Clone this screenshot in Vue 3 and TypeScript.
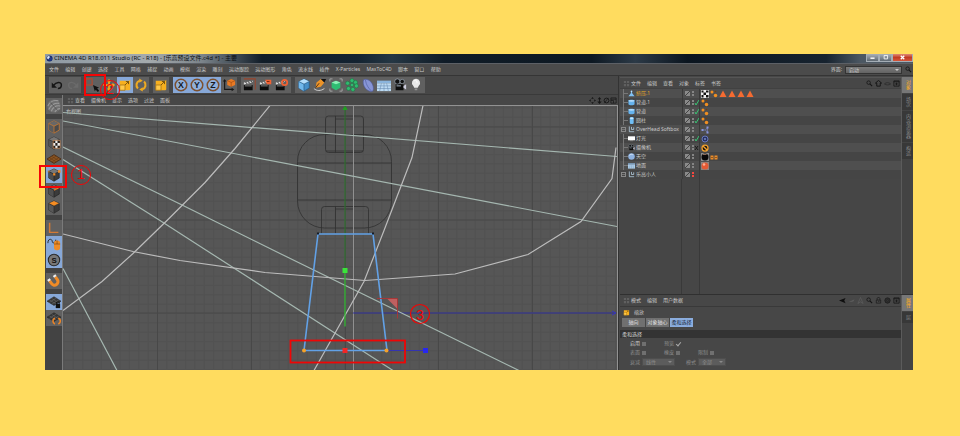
<script setup lang="ts">
import { ref } from 'vue'

interface SceneObject {
  name: string
  icon: string
  child: boolean
  state: 'check' | 'off' | 'red' | 'none'
  tags: string[]
  selected?: boolean
}
interface Tool {
  icon: string
  label: string
  on?: boolean
}

const menus = ['文件', '编辑', '创建', '选择', '工具', '网格', '捕捉', '动画', '模拟', '渲染', '雕刻', '运动跟踪', '运动图形', '角色', '流水线', '插件', 'X-Particles', 'MaxToC4D', '脚本', '窗口', '帮助']
const viewMenus = ['查看', '摄像机', '显示', '选项', '过滤', '面板']
const objectMenus = ['文件', '编辑', '查看', '对象', '标签', '书签']
const attrMenus = ['模式', '编辑', '用户数据']

const cube = (top: string, side: string, front: string, edge: string) =>
  `<path d="M8 1l6 3v7.500l-6 3.500-6-3.500V4z" fill="${side}" stroke="${edge}" stroke-width=".8"/><path d="M2 4l6 3 6-3-6-3z" fill="${top}"/><path d="M2 4l6 3v8l-6-3.500z" fill="${front}"/><path d="M2 4l6 3 6-3M8 7v8" fill="none" stroke="${edge}" stroke-width=".8"/>`
const clapper = '<path d="M1 8h10v6H1z" fill="#0c0c0c"/><path d="M1 5l10-2v2L1 7.500z" fill="#ddd"/><path d="M3 4.600l1.500 2M6 4l1.500 2M9 3.400l1.500 2M3 8l-1 1.500M6 8L5 9.500M9 8L8 9.500" stroke="#111"/><path d="M2 9h8" stroke="#ccc" stroke-width=".7"/>'
const axisLetter = (c: string) =>
  `<circle cx="8" cy="8" r="6.600" fill="#8fb0dc" stroke="#7d512f" stroke-width="1.700"/><text x="8" y="11.600" text-anchor="middle" font-size="10" font-weight="700" font-family="Liberation Sans, sans-serif" fill="#16181c">${c}</text>`
const plane = '<path d="M0 7l8-5 8 5-8 5z" fill="#363636" stroke="#222" stroke-width=".6"/><path d="M2.700 5.500l8 5M5.500 4l8 5M2.700 8.500l8-5M5.500 10.500l8-5" stroke="#777" stroke-width=".5"/>'

const art: Record<string, string> = {
  undo: '<path d="M4 8.500C7 4 13 4 13 8c0 2.500-2 4-4 4" fill="none" stroke="#161616" stroke-width="1.700"/><path d="M2 5v6h6z" fill="#161616"/>',
  redo: '<path d="M12 8.500C9 4 3 4 3 8c0 2.500 2 4 4 4" fill="none" stroke="#6b6b6b" stroke-width="1.500"/><path d="M14 5v6H8z" fill="#6b6b6b"/>',
  select: '<path d="M0 1h7v7H0z" fill="none" stroke="#b5482c" stroke-width="1.300"/><path d="M8 8l7 3-2.300.8L15 14.500l-1.500 1.500-2.300-2.500L10 15z" fill="#111"/>',
  move: '<path d="M8 1l2.500 3H9v3h3V5.500L15 8l-3 2.500V9H9v3h1.500L8 15l-2.500-3H7V9H4v1.500L1 8l3-2.500V7h3V4H5.500z" fill="#f3a71c"/>',
  scale: '<path d="M2 3h11l1-1v11l-1 1H2z" fill="#f7b01f"/><path d="M2 8h6v6H2z" fill="#ffc94a" stroke="#9a6a12" stroke-width=".8"/><path d="M8 8l4-4M9 4h3v3" fill="none" stroke="#6d4a0d"/>',
  rotate: '<path d="M6.500 3a5.400 5.400 0 00-2 9M9.500 13a5.400 5.400 0 002-9" fill="none" stroke="#efaa20" stroke-width="2.400"/><path d="M6 .5l4 2.500-4 2.500zM10 10.500v5L6 13z" fill="#efaa20"/>',
  x: axisLetter('X'), y: axisLetter('Y'), z: axisLetter('Z'),
  world: '<path d="M3 3v10h9" fill="none" stroke="#181818" stroke-width="1.300"/><path d="M3 1L1 4h4zM14 13l-3-2v4z" fill="#181818"/><path d="M10.500 1L15 3v5l-4.500 2L6 8V3z" fill="#ea7a24"/><path d="M6 3l4.500 2L15 3M10.500 5v5" stroke="#8c420c" stroke-width=".6" fill="none"/>',
  clap1: '<path d="M1 1h13v12" fill="none" stroke="#99452c" stroke-width="1.200"/>' + clapper,
  clap2: clapper + '<path d="M7 2h7v5H9z" fill="#ef6234"/><path d="M9 4h3" stroke="#71220d"/>',
  clap3: clapper + '<circle cx="11" cy="5" r="3" fill="none" stroke="#ef6234" stroke-width="2"/>',
  cube: cube('#b4defb', '#4790c9', '#70b8ec', '#265a85'),
  pen: '<path d="M1 12c3 3 8 3 12 0" stroke="#ddd" fill="none"/><path d="M3 11l1-6 5-4 4 4-4 5z" fill="#ec9328"/><path d="M9 1l4 4 2-4z" fill="#111"/><path d="M3 11l4-5" stroke="#45270a"/>',
  sub: '<path d="M1 4V1h3M12 1h3v3M15 12v3h-3M4 15H1v-3" fill="none" stroke="#bbb" stroke-width=".8"/><path d="M8 3l5 2v6l-5 3-5-3V5z" fill="#2ebd72"/><path d="M3 5l5 2 5-2-5-2z" fill="#8bf0b6"/>',
  array: '<g fill="#30b96f" stroke="#126b3a" stroke-width=".5"><circle cx="8" cy="3" r="2.300"/><circle cx="12" cy="5" r="2.300"/><circle cx="13" cy="9" r="2.300"/><circle cx="9" cy="13" r="2.300"/><circle cx="4" cy="12" r="2.300"/><circle cx="3" cy="6" r="2.300"/><circle cx="8" cy="8" r="2"/></g>',
  bend: '<path d="M3 2c4-2 10 2 11 8s-2 6-4 5C5 14 1 7 3 2z" fill="#8795d6" stroke="#4b5797" stroke-width=".7"/><path d="M5 2c1 6 3 9 7 13" fill="none" stroke="#5e6bb0"/>',
  floor: '<path d="M0 3h16v3H0z" fill="#8ab4dc"/><path d="M0 6h16v9H0z" fill="#bcdaf2"/><path d="M0 9h16M0 12h16M5 6l-2 9M11 6l2 9M8 6v9" stroke="#6187ac" stroke-width=".6"/>',
  camera: '<path d="M3 7h9v7H3z" fill="#0d0d0d"/><circle cx="5" cy="4" r="3" fill="#111" stroke="#bcd" stroke-width=".6"/><circle cx="10.500" cy="4" r="2.500" fill="#111" stroke="#bcd" stroke-width=".6"/><path d="M12 9l3-2v6l-3-2z" fill="#ccd"/><path d="M4 9h5" stroke="#bcd"/>',
  bulb: '<path d="M8 1a4.500 4.500 0 013 8l-1 2H6L5 9a4.500 4.500 0 013-8z" fill="#e8e8e8"/><path d="M6 3c2-1 4 1 3 3" stroke="#fff" fill="none"/><path d="M6.500 12h3v2h-3z" fill="#929292"/>',
  texture: '<circle cx="8" cy="8" r="7.500" fill="#707070"/><path d="M1 8C3 3 8 1 13 2M2 12C4 7 9 4 14 5M5 14c1-4 5-7 10-6M9 15c1-2 3-4 6-4" stroke="#9a9a9a" fill="none" stroke-width="1.200"/><path d="M4 4l8 9" stroke="#555"/>',
  model: cube('#676767', '#4b4b4b', '#5b5b5b', '#d77c2c'),
  check: cube('#777', '#444', '#555', '#333') + '<path d="M7 5h8v9H7z" fill="#eee"/><path d="M7 5h2.500v3H7zM12 5h3v3h-3zM9.500 8H12v3H9.500zM7 11h2.500v3H7zM12 11h3v3h-3z" fill="#26201c"/><path d="M7 5h8v9H7z" fill="none" stroke="#d57d3a" stroke-width=".6"/>',
  work: '<path d="M0 8l8-5 8 5-8 5z" fill="#8b5522" stroke="#4b2c12"/><path d="M2.700 6.500l8 5M5.500 5l8 5M2.700 9.500l8-5M5.500 11.500l8-5" stroke="#5c3413" stroke-width=".6"/>',
  points: cube('#777', '#3b3b3b', '#4d4d4d', '#222') + '<path d="M7 6h2.500v2.500H7zM12.500 2.500h3v3h-3z" fill="#f28a22"/><path d="M1 3h2v2H1z" fill="#a66a30"/>',
  edges: cube('#777', '#3b3b3b', '#505050', '#222') + '<path d="M8 7l6-3" stroke="#e57e25" stroke-width="1.500"/>',
  polys: cube('#f58d23', '#3b3b3b', '#585858', '#292929'),
  axis: '<path d="M3 2v11h10" fill="none" stroke="#d47a35" stroke-width="1.700"/>',
  mouse: '<path d="M1 7c0-6 5-5 5-2s4 2 4-2" fill="none" stroke="#222"/><rect x="8" y="4" width="7" height="11" rx="3" fill="#ef8c27"/><path d="M8 8h7M11.500 4v4" stroke="#74400d" stroke-width=".7"/>',
  solo: '<circle cx="8" cy="8" r="6.500" fill="#777" stroke="#292929" stroke-width="1.200"/><text x="8" y="11.300" text-anchor="middle" font-size="9" font-weight="700" font-family="Liberation Sans, sans-serif" fill="#111">S</text>',
  magnet: '<g transform="rotate(-35 8 8)"><path d="M4 5v4a4 4 0 008 0V5" fill="none" stroke="#f08b26" stroke-width="3.500"/><path d="M2.300 2.500h3.500V5H2.300zM10.200 2.500h3.500V5h-3.500z" fill="#eee"/></g>',
  lock: plane + '<path d="M10 10h5v5h-5z" fill="#111"/><path d="M11 10V8h3v2" fill="none" stroke="#111"/>',
  snap: plane + '<path d="M9 8c-3 2-3 5 0 7M13 8c3 2 3 5 0 7" fill="none" stroke="#ea8427" stroke-width="1.800"/>',
  cone: '<path d="M8 2l2 6 5 6H1l5-6z" fill="#7fc1f3"/><circle cx="8" cy="3" r="2" fill="#b7e0ff"/>',
  tube: '<path d="M1 3c2-2 12-2 14 0v9c-2 3-12 3-14 0z" fill="#65b3ee"/><ellipse cx="8" cy="4" rx="7" ry="2" fill="#b4dcfb"/>',
  cyl: '<rect x="4" y="0" width="9" height="16" rx="3" fill="#6fbdf4"/><ellipse cx="8.500" cy="3" rx="4" ry="2" fill="#c2e5ff"/>',
  nil: '<path d="M3 1v12h11M8 2v6h5V3" fill="none" stroke="#bcd7ea" stroke-width="1.700"/>',
  light: '<path d="M0 3h16v9H0z" fill="#fff"/><path d="M4 12h8v2H4z" fill="#999"/>',
  sky: '<circle cx="8" cy="8" r="7.500" fill="#8fb2df"/><path d="M3 6c2-3 5-4 8-2" fill="none" stroke="#d4e5f8" stroke-width="2"/>',
  tCheck: '<path d="M0 0h16v16H0z" fill="#eee"/><path d="M1 1h4v4H1zM10 1h5v4h-5zM5 5h5v5H5zM1 10h4v5H1zM10 10h5v5h-5z" fill="#111"/>',
  tDots: '<circle cx="4" cy="4" r="3" fill="#ef8f22"/><circle cx="11" cy="11" r="3.500" fill="#ef8f22"/><circle cx="11" cy="3" r="1.500" fill="#713d0e"/>',
  tTri: '<path d="M8 1l7 13H1z" fill="#f56b31"/>',
  tNet: '<path d="M3 8h6l4-5M9 8l4 5M13 3v10" fill="none" stroke="#8794df"/><path d="M1 6h4v4H1zM11 1h4v4h-4zM11 11h4v4h-4z" fill="#8794df"/>',
  tTarget: '<circle cx="8" cy="8" r="6" fill="#273260" stroke="#6878bd" stroke-width="2"/><circle cx="8" cy="8" r="2" fill="#7787c9"/>',
  tBan: '<circle cx="8" cy="8" r="6" fill="#111" stroke="#f2a02c" stroke-width="2.500"/><path d="M4 4l8 8" stroke="#f2a02c" stroke-width="3"/>',
  tBlack: '<path d="M0 0h16v16H0z" fill="#8c8c8c"/><circle cx="8" cy="8" r="7" fill="#080808"/><path d="M4 3h7" stroke="#8a6a5a" stroke-width="2"/>',
  tComp: '<path d="M1 5h6v8H1zM9 5h6v8H9z" fill="#e98c2a"/><path d="M3 9h2M11 9h2" stroke="#482509" stroke-width="2"/>',
  tRed: '<path d="M0 0h16v16H0z" fill="#8c8480"/><circle cx="8" cy="8" r="7" fill="#e45a35"/><circle cx="6" cy="5" r="2.500" fill="#ffac8f"/>',
  search: '<circle cx="6" cy="6" r="4" fill="none" stroke="#151515" stroke-width="1.800"/><path d="M9 9l5 5" stroke="#151515" stroke-width="2.500"/>',
  home: '<path d="M8 1l7 6h-3v7H4V7H1z" fill="none" stroke="#111" stroke-width="2"/>',
  eye: '<path d="M1 9c4-4 10-4 14 0-4 3-10 3-14 0z" fill="none" stroke="#242424" stroke-width="1.500"/>',
  plus: '<path d="M2 2h12v12H2zM2 4h12M8 6v6M5 9h6" fill="none" stroke="#161616" stroke-width="1.800"/>',
  pan: '<path d="M8 0l3 4H5zM8 16l3-4H5zM0 8l4-3v6zM16 8l-4-3v6z" fill="#161616"/>',
  dolly: '<path d="M8 0l4 5H9v5h4l-5 6-5-6h4V5H4z" fill="#161616"/>',
  orbit: '<circle cx="8" cy="8" r="5.500" fill="none" stroke="#161616" stroke-width="2"/><path d="M3 14L12 2" stroke="#161616" stroke-width="1.500"/>',
  maxi: '<path d="M2 2h12v12H2zM2 5h12M2 8h6v6" fill="none" stroke="#161616" stroke-width="1.500"/>',
  back: '<path d="M0 8l15-6-3 6 3 6z" fill="#0f0f0f"/>',
  fwd: '<path d="M1 12l14-7-3 5z" fill="#5e5e5e"/>',
  up: '<path d="M8 1l6 14-6-4-6 4z" fill="none" stroke="#606060" stroke-width="1.500"/>',
  pad: '<path d="M3 7h10v7H3zM5 7V3c1-3 5-3 6 0v4M7 10h3" fill="none" stroke="#1c1c1c" stroke-width="1.700"/>',
  aim: '<circle cx="8" cy="8" r="6" fill="#333" stroke="#1c1c1c" stroke-width="2"/><circle cx="8" cy="8" r="2.500" fill="none" stroke="#1c1c1c"/>',
  grip: '<path d="M2 2h5v5H2zM9 2h5v5H9zM2 9h5v5H2zM9 9h5v5H9z" fill="#606060"/>',
  logo: '<circle cx="8" cy="8" r="7" fill="#182c6b"/><circle cx="6" cy="6" r="3.500" fill="#dce6f7"/><circle cx="10" cy="9" r="4" fill="#203c8a"/>',
}

const toolGroups: Tool[][] = [
  [{ icon: 'undo', label: '撤销' }, { icon: 'redo', label: '重做' }],
  [{ icon: 'select', label: '选择' }, { icon: 'move', label: '移动' }, { icon: 'scale', label: '缩放', on: true }, { icon: 'rotate', label: '旋转' }],
  [{ icon: 'scale', label: '最近工具' }],
  [{ icon: 'x', label: 'X 轴', on: true }, { icon: 'y', label: 'Y 轴', on: true }, { icon: 'z', label: 'Z 轴', on: true }, { icon: 'world', label: '坐标系统' }],
  [{ icon: 'clap1', label: '渲染视图' }, { icon: 'clap2', label: '渲染到图片' }, { icon: 'clap3', label: '渲染设置' }],
  [{ icon: 'cube', label: '立方体' }, { icon: 'pen', label: '画笔' }, { icon: 'sub', label: '细分' }, { icon: 'array', label: '阵列' }, { icon: 'bend', label: '扭曲' }, { icon: 'floor', label: '地面' }, { icon: 'camera', label: '摄像机' }, { icon: 'bulb', label: '灯光' }],
]
const sideGroups: Tool[][] = [
  [{ icon: 'texture', label: '可编辑' }],
  [{ icon: 'model', label: '模型' }, { icon: 'check', label: '纹理' }, { icon: 'work', label: '工作平面' }, { icon: 'points', label: '点', on: true }, { icon: 'edges', label: '边' }, { icon: 'polys', label: '多边形' }],
  [{ icon: 'axis', label: '轴心' }, { icon: 'mouse', label: '微调', on: true }, { icon: 'solo', label: '独显', on: true }],
  [{ icon: 'magnet', label: '捕捉' }],
  [{ icon: 'lock', label: '锁定平面', on: true }, { icon: 'snap', label: '平面捕捉' }],
]

const objects = ref<SceneObject[]>([
  { name: '挤压.1', icon: 'cone', child: true, state: 'none', tags: ['tCheck', 'tDots', 'tTri', 'tTri', 'tTri', 'tTri'], selected: true },
  { name: '管道.1', icon: 'tube', child: true, state: 'check', tags: ['tDots'] },
  { name: '管道', icon: 'tube', child: true, state: 'check', tags: ['tDots'] },
  { name: '圆柱', icon: 'cyl', child: true, state: 'check', tags: ['tDots'] },
  { name: 'OverHead Softbox', icon: 'nil', child: false, state: 'none', tags: ['tNet'] },
  { name: '灯光', icon: 'light', child: true, state: 'check', tags: ['tTarget'] },
  { name: '摄像机', icon: 'camera', child: true, state: 'off', tags: ['tBan'] },
  { name: '天空', icon: 'sky', child: true, state: 'none', tags: ['tBlack', 'tComp'] },
  { name: '地面', icon: 'floor', child: true, state: 'none', tags: ['tRed'] },
  { name: '乐高小人', icon: 'nil', child: false, state: 'red', tags: [] },
])

const attrTabs = ['轴向', '对象轴心', '柔和选择']
const activeTab = ref('柔和选择')

// World grid: one major line every ten minor cells
const gridLines = (start: number, count: number): number[] => Array.from({ length: count }, (_, i) => start + i * 9.35)
const minorX = gridLines(64, 60)
const minorY = gridLines(107.3, 29)
const majorX = [157.5, 251.5, 345.5, 438.5, 532.5]
const majorY = [126.5, 219.5, 312.5]
</script>

<template>
  <main class="page">
    <section class="window">
      <header class="title-bar">
        <svg class="ico" viewBox="0 0 16 16" v-html="art.logo" />
        <h1>CINEMA 4D R18.011 Studio (RC - R18) - [乐高预设文件.c4d *] - 主要</h1>
        <div class="win-buttons">
          <button type="button" aria-label="最小化"><svg viewBox="0 0 16 8"><path d="M5 4h6v2H5z" fill="#fff" /></svg></button>
          <button type="button" aria-label="还原"><svg viewBox="0 0 16 8"><path d="M6 1h5v5H6z" fill="none" stroke="#fff" stroke-width="1.200" /></svg></button>
          <button type="button" class="close" aria-label="关闭"><svg viewBox="0 0 16 8"><path d="M6 2l4 4M10 2L6 6" stroke="#fff" stroke-width="1.500" /></svg></button>
        </div>
      </header>

      <div class="menu-bar">
        <nav class="menus"><a v-for="m in menus" :key="m" href="#">{{ m }}</a></nav>
        <label class="layout-pick">界面:
          <select><option>启动</option></select>
        </label>
        <svg class="ico" viewBox="0 0 16 16" v-html="art.search" />
      </div>

      <div class="body">
        <div class="work">
          <div class="toolbar">
            <div v-for="(g, i) in toolGroups" :key="i" class="tool-group">
              <button v-for="t in g" :key="t.label" type="button" :class="{ on: t.on }" :aria-label="t.label">
                <svg viewBox="0 0 16 16" v-html="art[t.icon]" />
              </button>
            </div>
            <div class="mark mark-select"></div>
            <span class="num num-two">2</span>
          </div>

          <div class="stage">
            <div class="side">
              <div v-for="(g, i) in sideGroups" :key="i" class="side-group">
                <button v-for="t in g" :key="t.label" type="button" :class="{ on: t.on }" :aria-label="t.label">
                  <svg viewBox="0 0 16 16" v-html="art[t.icon]" />
                </button>
              </div>
              <div class="mark mark-points"></div>
              <span class="num num-one">1</span>
            </div>

            <div class="viewport">
              <div class="panel-head">
                <svg class="ico grip" viewBox="0 0 16 16" v-html="art.grip" />
                <nav><a v-for="m in viewMenus" :key="m" href="#">{{ m }}</a></nav>
                <div class="head-icons">
                  <svg v-for="k in ['pan', 'dolly', 'orbit', 'maxi']" :key="k" class="ico" viewBox="0 0 16 16" v-html="art[k]" />
                </div>
              </div>
              <svg class="canvas" viewBox="63 105 554 265" preserveAspectRatio="xMidYMid slice">
                <rect x="63" y="105" width="554" height="265" fill="#565656" />
                <g stroke="#525252" stroke-width="1">
                  <line v-for="x in minorX" :key="'a' + x" :x1="x" y1="105" :x2="x" y2="370" />
                  <line v-for="y in minorY" :key="'b' + y" x1="63" :y1="y" x2="617" :y2="y" />
                </g>
                <g stroke="#484848" stroke-width="1">
                  <line v-for="x in majorX" :key="'c' + x" :x1="x" y1="105" :x2="x" y2="370" />
                  <line v-for="y in majorY" :key="'d' + y" x1="63" :y1="y" x2="617" :y2="y" />
                </g>
                <text x="66" y="112" class="view-name">右视图</text>

                <g fill="none" stroke="#303030" stroke-width="0.8">
                  <rect x="297.500" y="134" width="94" height="93.500" rx="27" />
                  <path d="M298 162.500h93M298 199.500h93" />
                  <rect x="325.500" y="115.500" width="38" height="36.500" rx="3" />
                  <path d="M335.500 115.500v36.500M335.500 118.500h18M326 150.500h37M353.500 115.500v36.500" />
                  <path d="M321.500 233v-24q0-3 3-3h41q3 0 3 3v24M335.500 206v27M335.500 208.500h18" />
                </g>
                <path d="M353.500 105v265" stroke="#909090" />
                <path d="M345 106v164" stroke="#2d792d" />
                <path d="M343 109l2-3 2 3z" fill="#20a020" stroke="#20a020" />
                <path d="M353 312.500h262" stroke="#3535a0" />
                <path d="M612 310.500l4 2-4 2" fill="none" stroke="#3535c0" />

                <g fill="none" stroke="#a5b7b0" stroke-width="1.200">
                  <path d="M63 112L617 156M63 120.500L617 226M63 146.500L180 203.500 280 253 519 370M63 159L160 220 393 370M63 268L117 370" />
                </g>
                <g fill="none" stroke="#bcbcbc" stroke-width="1.200">
                  <path d="M270 105L235 148 205 182 168 219 133 253 102 281 63 310" />
                  <path d="M63 233.500L133 251 180 260 265 272 365 280 455 273.500 528 254 581 221 612 178 616 147" />
                  <path d="M423 105L412 157 384 230 364 281 314 370" />
                </g>

                <path d="M345 270v56" stroke="#35b935" stroke-width="1.300" />
                <path d="M387 350h38" stroke="#3434b0" />
                <path d="M304 350L318 233.500h55L387 350z" fill="none" stroke="#62a1e6" stroke-width="1.600" />
                <g fill="#151b25"><path d="M317 232h2v2h-2zM372 232h2v2h-2z" /></g>
                <g fill="#f4a128"><circle cx="304" cy="350" r="2" /><circle cx="386.500" cy="350" r="2" /></g>
                <path d="M342.500 267.500h5v5h-5z" fill="#3be43b" />
                <path d="M342.500 347.500h5v5h-5z" fill="#f12626" />
                <path d="M423 347.500h5v5h-5z" fill="#2727ef" />
                <path d="M387 298h10v10z" fill="#bf6060" />
                <path d="M377 298h20.500v20" fill="none" stroke="#ad3434" stroke-width="0.900" />

                <rect x="290.500" y="340" width="114.500" height="22" fill="none" stroke="#f00505" stroke-width="1.800" />
                <circle cx="420" cy="313.500" r="9.500" fill="none" stroke="#f00505" stroke-width="1.200" />
                <text x="420" y="319" text-anchor="middle" class="view-num">3</text>
              </svg>
            </div>
          </div>
        </div>

        <aside class="managers">
          <section class="objects">
            <div class="panels">
              <div class="panel-head">
                <svg class="ico grip" viewBox="0 0 16 16" v-html="art.grip" />
                <nav><a v-for="m in objectMenus" :key="m" href="#">{{ m }}</a></nav>
                <div class="head-icons wide">
                  <svg v-for="k in ['search', 'home', 'eye', 'plus']" :key="k" class="ico" viewBox="0 0 16 16" v-html="art[k]" />
                </div>
              </div>
              <div class="tree">
                <div v-for="o in objects" :key="o.name" class="row">
                  <div class="name" :class="{ child: o.child, selected: o.selected }">
                    <i class="branch"></i>
                    <svg class="ico" viewBox="0 0 16 16" v-html="art[o.icon]" />
                    <span>{{ o.name }}</span>
                  </div>
                  <div class="flags">
                    <svg viewBox="0 0 15 9">
                      <path d="M1 2h5v5H1z" fill="#8a8a8a" /><path d="M1 7l5-5" stroke="#444" />
                      <path d="M8 2h2v2H8zM8 5h2v2H8z" :fill="o.state === 'red' ? '#f24840' : '#858585'" />
                      <path v-if="o.state === 'check'" d="M11 5l1 2 3-5" fill="none" stroke="#38c172" />
                      <path v-if="o.state === 'off'" d="M11 3l3 4M14 3l-3 4" stroke="#1b1b1b" />
                    </svg>
                  </div>
                  <div class="tags">
                    <svg v-for="(t, i) in o.tags" :key="i" viewBox="0 0 16 16" v-html="art[t]" />
                  </div>
                </div>
                <div class="rest"><i></i><i></i></div>
              </div>
            </div>
            <nav class="tabs">
              <a href="#" class="active">对象</a><a href="#">场次</a><a href="#">内容浏览器</a><a href="#">构造</a>
            </nav>
          </section>

          <section class="attributes">
            <div class="panels">
              <div class="panel-head">
                <svg class="ico grip" viewBox="0 0 16 16" v-html="art.grip" />
                <nav><a v-for="m in attrMenus" :key="m" href="#">{{ m }}</a></nav>
                <div class="head-icons wide">
                  <svg v-for="k in ['back', 'fwd', 'up', 'search', 'pad', 'aim', 'plus']" :key="k" class="ico" viewBox="0 0 16 16" v-html="art[k]" />
                </div>
              </div>
              <div class="attr-title"><svg class="ico" viewBox="0 0 16 16" v-html="art.scale" /><span>缩放</span></div>
              <div class="attr-tabs">
                <button v-for="t in attrTabs" :key="t" type="button" :class="{ active: activeTab === t }" @click="activeTab = t">{{ t }}</button>
              </div>
              <h2>柔和选择</h2>
              <div class="fields">
                <label class="lit">启用<input type="checkbox"></label>
                <label>预览<input type="checkbox" class="ticked" checked></label>
                <span></span>
                <label>表面<input type="checkbox"></label>
                <label>橡皮<input type="checkbox"></label>
                <label>限制<input type="checkbox"></label>
              </div>
              <div class="picks">
                <label>衰减<select><option>线性</option></select></label>
                <label>模式<select class="short"><option>全部</option></select></label>
              </div>
            </div>
            <nav class="tabs">
              <a href="#" class="active">属性</a><a href="#">层</a>
            </nav>
          </section>
        </aside>
      </div>
    </section>
  </main>
</template>

<style>
body { background: #ffdc5f; }
</style>

<style scoped>
* { box-sizing: border-box; }
.page {
  display: flex;
  min-height: 100vh;
  padding: 54px 47px 66px 45px;
  background: #ffdc5f;
  color: #cacaca;
  font: 5px/9px "Noto Sans", "Noto Sans CJK SC", sans-serif;
}
.window { display: flex; flex: 1; flex-direction: column; min-width: 0; background: #474747; }
a { color: inherit; text-decoration: none; white-space: nowrap; }
svg { display: block; }
button, select { padding: 0; border: 0; border-radius: 0; color: inherit; font: inherit; }
.ico { width: 7px; height: 7px; flex: none; }

.title-bar {
  display: flex;
  align-items: center;
  height: 10px;
  padding-left: 1px;
  border-bottom: 1px solid #5c6066;
  background: linear-gradient(90deg, #8f9aa3 0, #a4aaad 12%, #7d858b 18%, #4f5a63 21%, #111d28 25%, #142331 36%, #253744 40%, #101c27 46%, #0d1822 63%, #2c3a47 68%, #0b151f 74%, #17232f 90%, #4c5863 94%);
}
.title-bar h1 { margin: 0 0 0 1px; color: #0c1014; font-size: 6px; font-weight: 400; line-height: 9px; white-space: nowrap; }
.win-buttons { display: flex; align-self: flex-start; margin-left: auto; }
.win-buttons button { width: 13px; height: 8px; border: 1px solid #a4adb5; border-top: 0; background: linear-gradient(#a9b1b9, #5e6871); }
.win-buttons .close { width: 21px; background: linear-gradient(#dd8a78, #c23a23 50%, #d4583c); }
.win-buttons svg { width: 100%; height: 100%; }

.menu-bar { display: flex; align-items: center; height: 11px; padding: 0 1px 0 4px; background: #4b4b4b; }
.menus { display: flex; justify-content: space-between; width: 392px; }
.layout-pick { display: flex; align-items: center; gap: 3px; margin: 0 3px 0 auto; }
.layout-pick select { width: 57px; }
select { height: 8px; padding: 0 12px 0 3px; appearance: none; border: 1px solid #333; background: linear-gradient(#7b7b7b, #636363); line-height: 6px; }
.layout-pick, .picks label { position: relative; }
.layout-pick::after, .picks label::after {
  position: absolute; right: 3px; top: 4px; border: 2px solid transparent; border-top-color: #ccc; content: "";
}

.body { display: flex; flex: 1; min-height: 0; border-top: 1px solid #353535; }
.work { display: flex; flex: 1; flex-direction: column; min-width: 0; }
.toolbar { position: relative; display: flex; height: 19px; padding: 1px 0 0 4px; gap: 4px; border-bottom: 1px solid #3a3a3a; }
.tool-group { display: flex; height: 16px; background: #606060; }
.tool-group:nth-child(n + 5) { padding: 0 1px; }
.tool-group button, .side-group button { width: 16px; height: 16px; padding: 1px; background: #606060; }
.tool-group .on, .side-group .on { background: #87a8d8; }
.tool-group svg, .side-group svg { width: 100%; height: 100%; }
.stage { display: flex; flex: 1; min-height: 0; }
.side { position: relative; display: flex; flex-direction: column; gap: 5px; width: 18px; padding: 3px 1px; background: #434343; border-right: 1px solid #7a7a7a; }
.side-group { display: flex; flex-direction: column; }
.mark { position: absolute; border: 2px solid #f40505; pointer-events: none; }
.mark-select { left: 39px; top: -2px; width: 22px; height: 22px; }
.mark-points { left: -6px; top: 70px; width: 28px; height: 23px; }
.num { position: absolute; width: 20px; height: 20px; border: 1px solid #f40505; border-radius: 50%; color: #f40505; font: 14px/16px "Liberation Sans", sans-serif; text-align: center; }
.num-two { left: 55px; top: 4px; }
.num-one { left: 26px; top: 70px; }
.viewport { display: flex; flex: 1; flex-direction: column; min-width: 0; }
.panel-head { display: flex; align-items: center; flex: none; height: 10px; padding: 0 1px 0 4px; gap: 1px; background: #474747; }
.panel-head nav { display: flex; gap: 6px; }
.head-icons { display: flex; margin-left: auto; }
.head-icons.wide { gap: 2px; }
.canvas { width: 100%; min-height: 0; flex: 1 1 0; border-top: 1px solid #929292; border-right: 1px solid #929292; }
.view-name { fill: #c8c8c8; font-size: 5px; }
.view-num { fill: #f00505; font: 14px "Liberation Sans", sans-serif; }

.managers { display: flex; flex-direction: column; width: 295px; padding: 1px 0 0 1px; border-left: 1px solid #333; }
.objects { display: flex; flex: 1; min-height: 0; }
.attributes { display: flex; flex: none; height: 76px; border-top: 1px solid #303030; }
.panels { display: flex; flex: 1; flex-direction: column; min-width: 0; border-right: 1px solid #5b5b5b; }
.managers .panel-head { padding: 0 1px 0 3px; }
.objects .panel-head { height: 12px; border-top: 1px solid #555; border-bottom: 1px solid #414141; }
.tree { display: flex; flex: 1; flex-direction: column; min-height: 0; }
.row { display: grid; grid-template-columns: 62px 18px 1fr; height: 9px; background: #454545; }
.row:nth-child(odd) { background: #4f4f4f; }
.name { display: flex; align-items: center; padding-left: 8px; gap: 1px; position: relative; white-space: nowrap; }
.branch { position: absolute; left: 3px; top: 0; width: 5px; height: 9px; border-left: 1px solid #777; }
.branch::after { position: absolute; left: 0; top: 4px; width: 4px; border-top: 1px solid #777; content: ""; }
.name:not(.child) .branch { left: 1px; top: 2px; height: 5px; border: 1px solid #888; }
.name:not(.child) .branch::after { top: 1px; width: 3px; }
.selected { color: #e7ab28; }
.flags { padding-left: 1px; border-left: 1px solid #393939; border-right: 1px solid #393939; }
.flags svg { width: 15px; height: 9px; }
.tags { display: flex; align-items: center; gap: 1px; padding-left: 1px; }
.tags svg { width: 8px; height: 8px; }
.rest { display: grid; flex: 1; grid-template-columns: 62px 18px; background: #464646; }
.rest i { border-right: 1px solid #393939; }

.tabs { display: flex; flex-direction: column; flex: none; width: 11px; gap: 1px; background: #434343; }
.tabs a { padding: 3px 0; background: #383838; color: #8a8a8a; line-height: 11px; writing-mode: vertical-rl; }
.tabs .active { background: #777; color: #ffb01d; }

.attributes .panel-head { height: 12px; border-bottom: 1px solid #393939; }
.attr-title { display: flex; align-items: center; gap: 4px; height: 11px; padding-left: 3px; }
.attr-tabs { display: flex; gap: 1px; padding-left: 2px; }
.attr-tabs button { width: 23px; height: 9px; background: #707070; color: #e4e4e4; line-height: 9px; white-space: nowrap; }
.attr-tabs .active { background: #8badde; color: #14202f; }
h2 { margin: 3px 0 1px; padding-left: 2px; background: #333; color: #d8d8d8; font: inherit; line-height: 8px; }
.fields { display: grid; grid-template-columns: 34px 34px 34px; row-gap: 0; padding-left: 10px; color: #8a8a8a; }
.fields label { display: flex; align-items: center; gap: 2px; height: 9px; }
.fields .lit { color: #cacaca; }
.fields input { width: 4px; height: 4px; margin: 0; appearance: none; background: #707070; }
.fields .ticked { position: relative; background: transparent; }
.ticked::after { position: absolute; left: 1px; top: -1px; width: 2px; height: 4px; border: solid #aaa; border-width: 0 1px 1px 0; transform: rotate(40deg); content: ""; }
.picks { display: flex; gap: 11px; padding-left: 10px; color: #8a8a8a; }
.picks label { display: flex; align-items: center; gap: 2px; height: 10px; }
.picks select { width: 33px; background: #5c5c5c; border-color: #4e4e4e; }
.picks .short { width: 28px; }
.picks label::after { border-top-color: #8a8a8a; }
</style>
